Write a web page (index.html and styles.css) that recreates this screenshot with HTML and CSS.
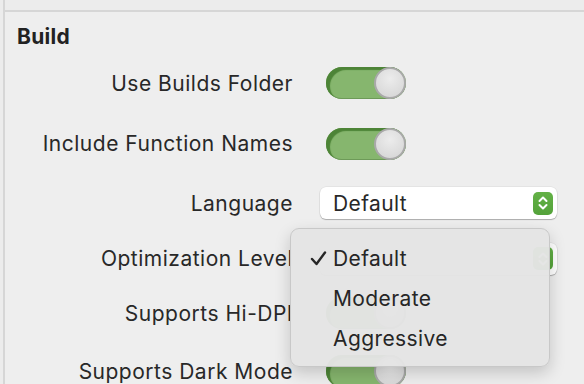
FILE: index.html
```html
<!DOCTYPE html>
<html lang="en">
<head>
    <meta charset="UTF-8">
    <title>Build Settings</title>
    <link rel="stylesheet" href="styles.css">
</head>
<body>
    <div class="panel">
        <div class="topbar"></div>
        <div class="section">
            <h3 class="section-title">Build</h3>

            <div class="row row-a">
                <div class="label">Use Builds Folder</div>
                <div class="toggle"><span class="knob"></span></div>
            </div>

            <div class="row row-b">
                <div class="label">Include Function Names</div>
                <div class="toggle"><span class="knob"></span></div>
            </div>

            <div class="row row-c">
                <div class="label">Language</div>
                <div class="select">
                    <span class="select-text">Default</span>
                    <span class="stepper">
                        <svg width="10" height="16" viewBox="0 0 10 16">
                            <path d="M1.5 6 L5 2.5 L8.5 6 M1.5 10 L5 13.5 L8.5 10" fill="none" stroke="#fff" stroke-width="2" stroke-linecap="round" stroke-linejoin="round"/>
                        </svg>
                    </span>
                </div>
            </div>

            <div class="row row-d">
                <div class="label">Optimization Level</div>
                <div class="select">
                    <span class="select-text">Default</span>
                    <span class="stepper">
                        <svg width="10" height="16" viewBox="0 0 10 16">
                            <path d="M1.5 6 L5 2.5 L8.5 6 M1.5 10 L5 13.5 L8.5 10" fill="none" stroke="#fff" stroke-width="2" stroke-linecap="round" stroke-linejoin="round"/>
                        </svg>
                    </span>
                </div>
            </div>

            <div class="row row-e">
                <div class="label">Supports Hi-DPI</div>
                <div class="toggle"><span class="knob"></span></div>
            </div>

            <div class="row row-f">
                <div class="label">Supports Dark Mode</div>
                <div class="toggle"><span class="knob"></span></div>
            </div>
        </div>

        <ul class="menu">
            <li class="menu-item">
                <span class="check">
                    <svg width="17" height="15" viewBox="0 0 17 15">
                        <path d="M2 8 L6.5 13 L15 1.5" fill="none" stroke="#262626" stroke-width="2.4" stroke-linecap="round" stroke-linejoin="round"/>
                    </svg>
                </span>Default
            </li>
            <li class="menu-item"><span class="check"></span>Moderate</li>
            <li class="menu-item"><span class="check"></span>Aggressive</li>
        </ul>
    </div>
</body>
</html>
```

FILE: styles.css
```css
body {
    margin: 0;
    background-color: #ececec;
    font-family: 'Inter', 'Noto Sans', sans-serif;
    color: #282828;
    overflow: hidden;
}

.panel {
    position: relative;
    width: 584px;
    height: 384px;
    overflow: hidden;
}

.topbar {
    height: 10px;
    margin-left: 3px;
    border-left: 2px solid #d6d6d6;
    border-bottom: 2px solid #d6d6d6;
}

.section {
    margin-left: 3px;
    border-left: 2px solid #d6d6d6;
    height: 372px;
    overflow: hidden;
    background-color: #eeeeee;
}

.section-title {
    margin: 0;
    padding: 12px 0 0 12px;
    height: 29px;
    font-size: 21px;
    font-weight: 700;
    letter-spacing: 0.3px;
    color: #222;
}

.row {
    display: flex;
    align-items: center;
}

.row-a { height: 60px; }
.row-b { height: 61px; }
.row-c { height: 58px; }
.row-d { height: 53px; }
.row-e { height: 56px; }
.row-f { height: 60px; }

.label {
    width: 288px;
    text-align: right;
    font-size: 21px;
    letter-spacing: 0.5px;
}

.toggle {
    position: relative;
    margin-left: 33px;
    width: 80px;
    height: 32px;
    border-radius: 16px;
    background-color: #86b66e;
    box-shadow: inset 4px 3px 1px #4d8437, inset 0 -1px 0 #6d9a58;
}

.knob {
    position: absolute;
    right: 0;
    top: 0;
    width: 28px;
    height: 28px;
    border-radius: 50%;
    border: 2px solid #a9a9a9;
    background: radial-gradient(circle at 50% 35%, #ececec 0%, #dddddd 60%, #d3d3d3 100%);
}

.select {
    display: flex;
    align-items: center;
    justify-content: space-between;
    margin-left: 27px;
    width: 237px;
    height: 32px;
    box-sizing: border-box;
    padding: 0 4px 0 13px;
    background-color: #fff;
    border-radius: 6px;
    box-shadow: 0 1px 1px rgba(0, 0, 0, 0.25), 0 0 0 0.5px rgba(0, 0, 0, 0.08);
}

.select-text {
    font-size: 21px;
    letter-spacing: 0.4px;
}

.stepper {
    display: flex;
    align-items: center;
    justify-content: center;
    width: 20px;
    height: 23px;
    border-radius: 5px;
    background: linear-gradient(#63b146, #54a23a);
}

.menu {
    position: absolute;
    left: 290px;
    top: 228px;
    width: 260px;
    height: 139px;
    box-sizing: border-box;
    margin: 0;
    padding: 9px 0 0 0;
    list-style: none;
    background-color: rgba(228, 228, 228, 0.97);
    border: 1px solid #c8c8c8;
    border-radius: 9px;
    box-shadow: 0 6px 16px rgba(0, 0, 0, 0.18);
}

.menu-item {
    display: flex;
    align-items: center;
    height: 40px;
    font-size: 21px;
    letter-spacing: 0.4px;
    color: #262626;
}

.check {
    display: flex;
    align-items: center;
    width: 42px;
    height: 40px;
    padding-left: 19px;
    box-sizing: border-box;
}
```
